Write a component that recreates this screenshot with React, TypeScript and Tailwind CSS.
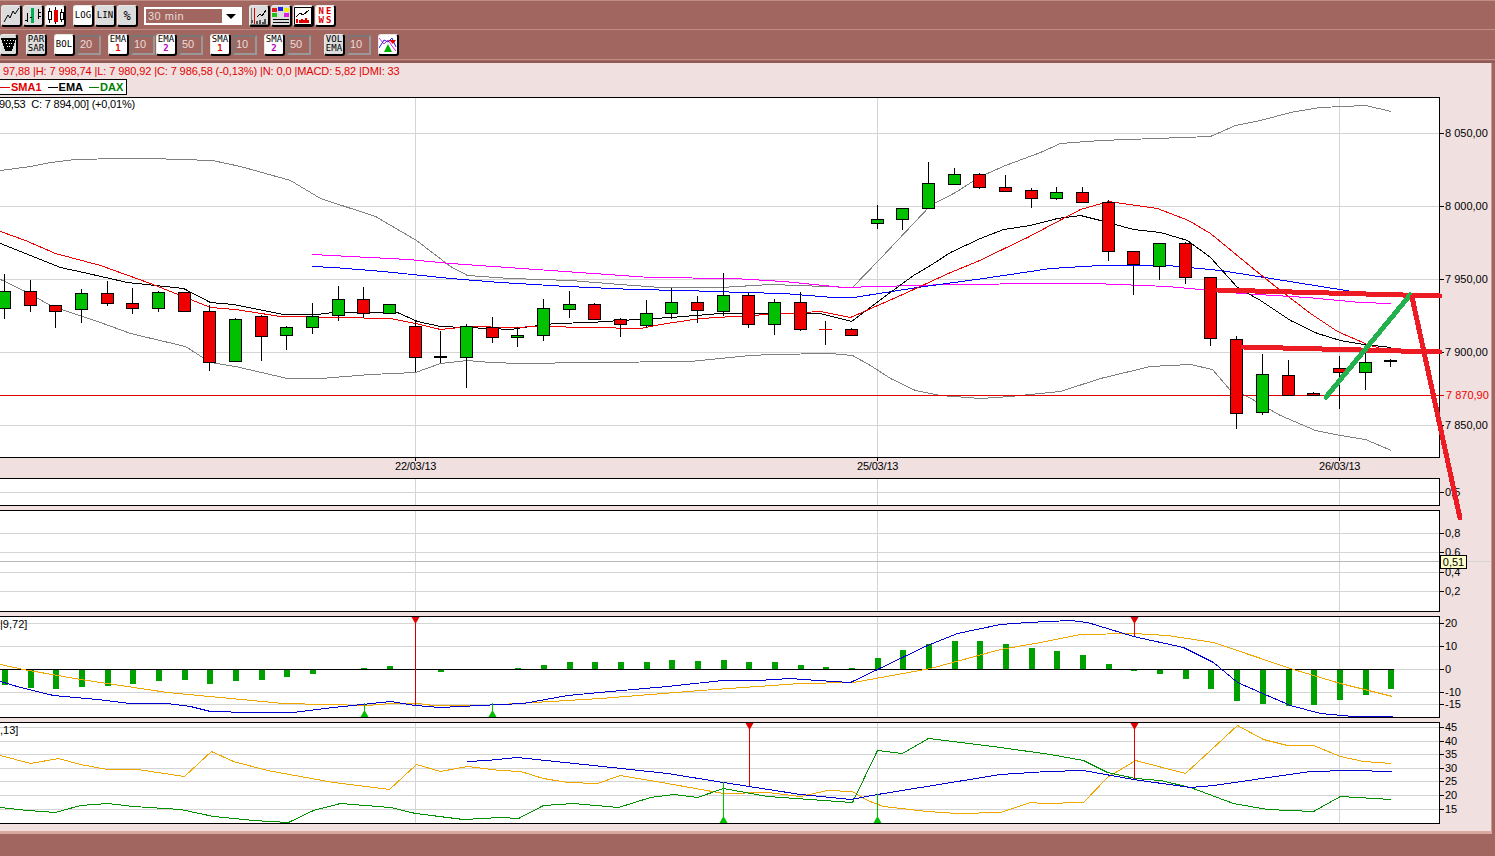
import type { ReactNode } from "react";

type Pt = [number, number];
type Candle = [number, number, number, number, "g" | "r" | "b" | "t"];

const step = 25.67;
const cx = (i: number) => Math.round(4 + step * i);
const pts = (p: Pt[]) => p.map(([x, y]) => `${x + 0.5},${y + 0.5}`).join(" ");

// high, body top, body bottom, low, kind
const candles: Candle[] = [
  [274, 291, 308, 319, "g"], [280, 291, 305, 312, "r"], [305, 305, 311, 328, "r"], [289, 293, 309, 323, "g"],
  [281, 293, 303, 306, "r"], [288, 303, 308, 314, "r"], [291, 292, 308, 312, "g"], [292, 292, 311, 312, "r"],
  [305, 311, 362, 371, "r"], [318, 319, 361, 362, "g"], [315, 316, 336, 361, "r"], [326, 327, 335, 350, "g"],
  [303, 316, 327, 334, "g"], [286, 299, 315, 321, "g"], [287, 299, 313, 318, "r"], [304, 304, 313, 313, "g"],
  [320, 326, 357, 372, "r"], [331, 357, 357, 363, "b"], [324, 326, 357, 388, "g"], [317, 327, 337, 343, "r"],
  [327, 335, 337, 347, "g"], [299, 308, 335, 341, "g"], [291, 304, 309, 318, "g"], [303, 304, 319, 319, "r"],
  [318, 319, 324, 337, "r"], [300, 313, 325, 328, "g"], [288, 302, 313, 319, "g"], [296, 302, 310, 323, "r"],
  [273, 295, 311, 316, "g"], [292, 295, 324, 328, "r"], [299, 302, 324, 335, "g"], [292, 302, 329, 331, "r"],
  [321, 329, 329, 345, "t"], [328, 329, 335, 335, "r"], [205, 219, 223, 229, "g"], [208, 208, 219, 230, "g"],
  [162, 183, 208, 209, "g"], [168, 174, 184, 184, "g"], [173, 174, 187, 189, "r"], [175, 187, 191, 191, "r"],
  [188, 190, 198, 208, "r"], [187, 192, 198, 200, "g"], [187, 192, 202, 203, "r"], [200, 202, 251, 261, "r"],
  [251, 251, 264, 295, "r"], [243, 243, 266, 280, "g"], [242, 243, 277, 284, "r"], [277, 277, 338, 346, "r"],
  [336, 339, 413, 429, "r"], [354, 374, 412, 415, "g"], [360, 375, 395, 395, "r"], [392, 393, 395, 395, "r"],
  [356, 368, 372, 409, "r"], [350, 362, 372, 390, "g"], [359, 361, 361, 367, "b"],
];

const bollUp: Pt[] = [[0,170],[30,166],[50,162],[75,159],[120,158],[150,158],[212,160],[240,166],[290,180],[320,198],[375,216],[416,240],[450,266],[467,275],[510,278],[570,280],[620,284],[660,287],[720,287],[770,284],[852,287],[880,258],[930,205],[955,192],[980,176],[1005,165],[1040,152],[1060,143],[1100,140],[1210,136],[1235,125],[1260,120],[1290,112],[1320,107],[1365,105],[1391,111]];
const bollDown: Pt[] = [[0,279],[25,291],[50,305],[70,312],[100,322],[130,333],[185,346],[210,362],[235,366],[287,378],[320,378],[370,374],[415,372],[440,363],[467,360],[490,362],[520,363],[590,362],[690,361],[720,358],[750,355],[771,354],[830,353],[852,355],[870,365],[890,378],[915,390],[940,395],[980,398],[1010,396],[1060,391],[1100,378],[1150,366],[1190,364],[1212,369],[1230,390],[1245,395],[1280,415],[1315,430],[1340,435],[1365,439],[1391,450]];
const ema: Pt[] = [[0,243],[50,263],[60,267],[83,272],[127,282],[183,288],[210,302],[233,304],[283,314],[317,314],[333,312],[397,312],[417,321],[440,326],[490,328],[510,329],[530,326],[555,323],[590,322],[620,320],[670,317],[720,313],[820,313],[851,321],[883,297],[913,275],[930,265],[950,252],[980,238],[1003,229],[1030,225],[1057,218],[1080,215],[1100,220],[1133,229],[1160,232],[1187,240],[1210,257],[1237,287],[1260,300],[1290,320],[1317,333],[1340,340],[1363,344],[1391,347]];
const sma: Pt[] = [[0,231],[25,240],[55,253],[100,265],[150,283],[185,297],[210,307],[235,309],[280,316],[390,318],[415,323],[440,329],[470,326],[510,327],[540,326],[590,327],[640,328],[660,324],[700,318],[750,315],[820,311],[850,317],[900,295],[950,272],[977,261],[1027,237],[1080,209],[1108,201],[1157,208],[1188,220],[1210,233],[1255,270],[1280,290],[1310,313],[1337,331],[1367,344],[1380,348]];
const sma2: Pt[] = [[312,266],[333,267],[383,271],[450,278],[500,282],[567,286],[633,289],[683,290],[743,292],[783,293],[833,297],[853,297],[917,287],[983,278],[1050,268],[1100,265],[1167,265],[1220,270],[1283,280],[1358,292]];
const ema2: Pt[] = [[312,254],[350,256],[408,259],[450,263],[550,270],[650,277],[733,278],[783,281],[843,287],[950,284],[1050,283],[1093,283],[1167,286],[1200,289],[1240,293],[1307,297],[1360,302],[1391,303]];

const macdBars = [685,688,689,687,686,684,681,680,684,681,680,677,674,669,668,666,669,672,669,669,668,665,662,662,662,662,660,661,660,662,662,665,667,668,658,650,644,641,641,644,648,651,655,664,671,674,679,689,701,704,706,705,700,695,689];
const macdBlue: Pt[] = [[0,681],[20,687],[53,695],[97,699],[130,703],[167,703],[190,706],[210,711],[250,712],[293,712],[333,707],[390,701],[415,705],[440,707],[500,704],[523,703],[567,695],[610,691],[667,686],[722,680],[757,680],[790,678],[817,680],[850,682],[877,669],[927,645],[957,633],[1000,624],[1027,622],[1070,620],[1087,622],[1133,636],[1183,647],[1213,662],[1237,682],[1260,692],[1290,705],[1320,713],[1353,716],[1392,716]];
const macdOrange: Pt[] = [[0,664],[23,669],[80,679],[167,692],[283,703],[367,705],[390,703],[417,703],[433,705],[480,705],[500,704],[600,698],[700,690],[800,683],[853,682],[930,668],[1000,649],[1040,642],[1080,634],[1133,633],[1167,635],[1213,642],[1293,669],[1340,683],[1392,696]];

const dmiOrange: Pt[] = [[0,755],[30,763],[58,758],[80,764],[107,769],[137,769],[184,776],[211,751],[233,761],[267,770],[333,782],[389,789],[416,764],[440,771],[467,766],[500,770],[520,771],[543,778],[567,782],[597,783],[620,775],[667,783],[723,793],[767,792],[800,796],[827,790],[852,791],[867,800],[883,806],[927,811],[957,813],[1000,812],[1030,802],[1043,803],[1083,802],[1107,777],[1135,760],[1185,773],[1210,750],[1237,725],[1263,739],[1287,745],[1313,745],[1340,756],[1363,761],[1391,763]];
const dmiGreen: Pt[] = [[0,807],[27,810],[55,812],[80,805],[107,803],[133,806],[180,809],[213,816],[253,820],[288,822],[313,810],[340,803],[390,807],[415,813],[463,819],[500,817],[518,818],[543,805],[573,803],[618,807],[650,797],[673,794],[697,797],[723,788],[767,796],[852,802],[877,750],[902,753],[928,738],[1000,747],[1050,754],[1083,760],[1107,772],[1135,778],[1160,780],[1190,787],[1233,803],[1267,809],[1313,811],[1340,796],[1391,799]];
const dmiBlue: Pt[] = [[467,761],[487,760],[517,757],[593,765],[667,773],[723,782],[800,794],[850,799],[877,794],[1000,774],[1047,771],[1083,770],[1133,779],[1190,787],[1213,785],[1310,771],[1350,770],[1392,771]];

function Line({ p, color }: { p: Pt[]; color: string }) {
  return <polyline points={pts(p)} fill="none" stroke={color} strokeWidth={1} shapeRendering="crispEdges" />;
}

function Grid({ ys, y1, y2 }: { ys: number[]; y1: number; y2: number }) {
  return (
    <g stroke="#d4d4d4" shapeRendering="crispEdges">
      {ys.map((y) => (
        <line key={y} x1={0} x2={1440} y1={y + 0.5} y2={y + 0.5} />
      ))}
      {[415, 877, 1339].map((x) => (
        <line key={x} x1={x + 0.5} x2={x + 0.5} y1={y1} y2={y2} />
      ))}
    </g>
  );
}

function Panel({
  top,
  height,
  ticks,
  children,
}: {
  top: number;
  height: number;
  ticks: [number, string][];
  children: ReactNode;
}) {
  return (
    <div className="flex shrink-0" style={{ height }}>
      <div className="w-[1440px] border border-l-0 border-black bg-white">
        <svg width={1439} height={height - 2} viewBox={`0 ${top + 1} 1439 ${height - 2}`} className="block">
          {children}
        </svg>
      </div>
      <svg width={51} height={height} viewBox={`1440 ${top} 51 ${height}`} className="block overflow-visible">
        {ticks.map(([y, t]) => (
          <g key={t}>
            <line x1={1440} x2={1444} y1={y + 0.5} y2={y + 0.5} stroke="#000" shapeRendering="crispEdges" />
            <text x={1445} y={y + 3.5} fontSize={11} fill="#000">
              {t}
            </text>
          </g>
        ))}
      </svg>
    </div>
  );
}

function Pin({ x, y1, y2, color }: { x: number; y1: number; y2: number; color: string }) {
  return <line x1={x + 0.5} x2={x + 0.5} y1={y1} y2={y2} stroke={color} shapeRendering="crispEdges" />;
}

function TriDown({ x, y }: { x: number; y: number }) {
  return <polygon points={`${x - 3.5},${y} ${x + 4.5},${y} ${x + 0.5},${y + 7}`} fill="#e00000" />;
}

function TriUp({ x, y }: { x: number; y: number }) {
  return <polygon points={`${x - 3.5},${y} ${x + 4.5},${y} ${x + 0.5},${y - 7}`} fill="#00c000" />;
}

function Btn({
  children,
  gray,
  w = "w-[21px]",
  h = "h-[22px]",
  ml,
}: {
  children: ReactNode;
  gray?: boolean;
  w?: string;
  h?: string;
  ml?: string;
}) {
  return (
    <div
      className={`${w} ${h} ${ml ?? ""} ${gray ? "bg-[#dcdcdc]" : "bg-white"} shrink-0 flex flex-col items-center justify-center rounded-[3px] border-t border-l border-t-[#e8e8e8] border-l-[#e8e8e8] border-r-2 border-b-2 border-r-black border-b-black overflow-hidden leading-[9px] text-[9px] text-black font-['DejaVu_Sans_Mono',monospace]`}
    >
      {children}
    </div>
  );
}

function Field({ v }: { v: string }) {
  return (
    <div className="ml-[2px] w-[24px] h-[20px] shrink-0 flex items-center pl-[1px] border-2 border-t-[#777] border-l-[#777] border-r-[#999] border-b-[#999] text-[11px] text-[#eadcd8] font-['Liberation_Sans',sans-serif]">
      {v}
    </div>
  );
}

function Ema({ a, n, c }: { a: string; n: string; c: string }) {
  return (
    <>
      <span>{a}</span>
      <span className={`${c} font-bold`}>{n}</span>
    </>
  );
}

export default function App() {
  return (
    <div className="relative flex h-[856px] w-[1495px] flex-col overflow-hidden bg-[#a0665f] font-['Liberation_Sans',sans-serif]">
      {/* toolbars */}
      <div className="h-[30px] shrink-0 flex items-center pl-[1px] pt-[2px] border-t border-t-[#c08c84] border-b border-b-[#c08c84]">
        <Btn gray>
          <svg width="17" height="17" viewBox="0 0 17 17" fill="none" stroke="#000">
            <path d="M1 15 5 8 7 11 10 4 12 7 16 1" />
          </svg>
        </Btn>
        <Btn gray ml="ml-[1px]">
          <svg width="18" height="17" viewBox="0 0 18 17" fill="none" stroke="#000" shapeRendering="crispEdges">
            <path d="M3.5 6v9M1 13h3M14.5 2v10M14 5h3M14 9h3" />
            <path d="M8.5 1v15" stroke="#00b050" strokeWidth="3" />
            <path d="M6 10h2" />
          </svg>
        </Btn>
        <Btn ml="ml-[1px]">
          <svg width="18" height="17" viewBox="0 0 18 17" shapeRendering="crispEdges" stroke="#000">
            <path d="M3.5 1v15M9.5 0v17M15.5 2v13" />
            <rect x="2" y="4" width="3" height="8" fill="#fff" />
            <rect x="8" y="3" width="3" height="11" fill="#e00000" stroke="#e00000" />
            <rect x="14" y="5" width="3" height="7" fill="#fff" />
          </svg>
        </Btn>
        <Btn ml="ml-[7px]">LOG</Btn>
        <Btn gray ml="ml-[1px]">LIN</Btn>
        <Btn gray ml="ml-[1px]"><span className="text-[12px] leading-none">%</span></Btn>
        <div className="ml-[6px] flex h-[18px] w-[98px] shrink-0 items-stretch border-2 border-white">
          <div className="flex-1 pl-[2px] text-[11px] leading-[14px] tracking-[0.5px] text-[#eadcd8]">30 min</div>
          <div className="flex w-[18px] items-center justify-center bg-white">
            <div className="h-0 w-0 border-x-[5px] border-t-[5px] border-x-transparent border-t-black" />
          </div>
        </div>
        <Btn gray ml="ml-[7px]">
          <svg width="18" height="18" viewBox="0 0 18 18" fill="none" shapeRendering="crispEdges">
            <path d="M1 1v16h16" stroke="#777" />
            <path d="M4.5 1v16" stroke="#e00000" />
            <path d="M7 10 10 7 12 9 16 3" stroke="#000" />
            <path d="M2 16v-3M7 17v-3M10 17v-4M13 17v-2M15 17v-5" stroke="#555" strokeWidth="1.5" />
          </svg>
        </Btn>
        <Btn gray ml="ml-[1px]">
          <svg width="18" height="18" viewBox="0 0 18 18" shapeRendering="crispEdges">
            <rect x="0" y="1" width="5" height="4" fill="#e02020" />
            <rect x="6" y="0" width="5" height="4" fill="#2020e0" />
            <rect x="12" y="1" width="5" height="4" fill="#f0f000" />
            <rect x="0" y="6" width="5" height="4" fill="#20c020" />
            <rect x="12" y="6" width="5" height="4" fill="#e020e0" />
            <rect x="1" y="12" width="16" height="1" fill="#000" />
            <rect x="1" y="15" width="16" height="1" fill="#000" />
          </svg>
        </Btn>
        <Btn ml="ml-[1px]">
          <svg width="18" height="18" viewBox="0 0 18 18" fill="none" shapeRendering="crispEdges">
            <rect x="0.5" y="0.5" width="17" height="17" stroke="#000" />
            <path d="M2 10 6 6 9 8 15 3" stroke="#000" />
            <path d="M3 16v-4M6 16v-3M8 16v-4M10 16v-3M12 16v-5M14 16v-3" stroke="#e00000" strokeWidth="1.5" />
          </svg>
        </Btn>
        <Btn ml="ml-[1px]">
          <div className="grid grid-cols-2 gap-x-[2px] text-[9px] font-bold leading-[9px] text-[#e00000]">
            <span>N</span>
            <span>E</span>
            <span>W</span>
            <span>S</span>
          </div>
        </Btn>
      </div>
      <div className="h-[30px] shrink-0 flex items-center border-b border-b-[#c08c84]">
        <Btn gray w="w-[18px]">
          <svg width="15" height="15" viewBox="0 0 15 15" shapeRendering="crispEdges">
            <path d="M0 1h15L11 14H4z" fill="#000" />
            <path d="M3 3h1v1H3zM6 3h1v1H6zM9 3h1v1H9zM12 3h1v1h-1zM5 6h1v1H5zM8 6h1v1H8zM10 6h1v1h-1zM6 9h1v1H6zM8 9h1v1H8z" fill="#fff" />
          </svg>
        </Btn>
        <Btn gray ml="ml-[8px]">
          <span>PAR</span>
          <span>SAR</span>
        </Btn>
        <Btn ml="ml-[7px]">BOL</Btn>
        <Field v="20" />
        <Btn ml="ml-[7px]"><Ema a="EMA" n="1" c="text-[#e00000]" /></Btn>
        <Field v="10" />
        <Btn ml="ml-[1px]"><Ema a="EMA" n="2" c="text-[#c000c0]" /></Btn>
        <Field v="50" />
        <Btn ml="ml-[7px]"><Ema a="SMA" n="1" c="text-[#e00000]" /></Btn>
        <Field v="10" />
        <Btn ml="ml-[7px]"><Ema a="SMA" n="2" c="text-[#c000c0]" /></Btn>
        <Field v="50" />
        <Btn gray ml="ml-[13px]">
          <span>VOL</span>
          <span>EMA</span>
        </Btn>
        <Field v="10" />
        <Btn ml="ml-[7px]">
          <svg width="18" height="18" viewBox="0 0 18 18" fill="none">
            <path d="M0 3 5 9 9 5 13 11 17 16" stroke="#e020e0" />
            <path d="M0 13 5 5 9 7 13 3 17 12" stroke="#2020e0" />
            <path d="M9 9 5 17h8z" fill="#00b000" />
            <path d="M10 5h7l-3 4z" fill="#e00000" />
          </svg>
        </Btn>
      </div>

      {/* window body */}
      <div className="flex min-h-0 flex-1 flex-col">
        <div className="mt-[1px] h-[2px] shrink-0 bg-[#8f5a54]" />
        <div className="flex flex-col bg-[#f0e0e0] mr-[3px] h-[768px] shrink-0 overflow-hidden border-r border-r-[#c89a92]">
          <div className="h-[16px] shrink-0 whitespace-pre pl-[3px] pt-[2px] text-[11px] leading-[13px] tracking-[-0.1px] text-[#e00000]">
            97,88 |H: 7 998,74 |L: 7 980,92 |C: 7 986,58 (-0,13%) |N: 0,0 |MACD: 5,82 |DMI: 33
          </div>
          <div className="flex h-[16px] w-[127px] shrink-0 items-center gap-[6px] border border-l-0 border-black bg-white text-[11px] font-bold leading-none">
            <span className="flex items-center text-[#e00000]"><i className="mr-[1px] h-px w-[10px] bg-[#e00000]" />SMA1</span>
            <span className="flex items-center text-black"><i className="mr-[1px] h-px w-[10px] bg-black" />EMA</span>
            <span className="flex items-center text-[#008000]"><i className="mr-[1px] h-px w-[10px] bg-[#008000]" />DAX</span>
          </div>
          <div className="h-[2px] shrink-0" />

          {/* main price chart */}
          <Panel
            top={97}
            height={361}
            ticks={[
              [133, "8 050,00"],
              [206, "8 000,00"],
              [279, "7 950,00"],
              [352, "7 900,00"],
              [425, "7 850,00"],
            ]}
          >
            <Grid ys={[133, 206, 279, 352, 425]} y1={98} y2={457} />
            <text x={-1} y={108} fontSize={11} fill="#000" letterSpacing={-0.2} className="whitespace-pre">
              90,53  C: 7 894,00] (+0,01%)
            </text>
            <Line p={bollUp} color="#808080" />
            <Line p={bollDown} color="#808080" />
            <Line p={ema2} color="#ff00ff" />
            <Line p={sma2} color="#0000ff" />
            <Line p={ema} color="#000000" />
            <Line p={sma} color="#f00000" />
            <line x1={0} x2={1440} y1={395.5} y2={395.5} stroke="#e00000" shapeRendering="crispEdges" />
            {candles.map(([hi, top, bot, lo, k], i) => {
              const x = cx(i);
              return (
                <g key={i} shapeRendering="crispEdges">
                  <line x1={x + 0.5} x2={x + 0.5} y1={hi} y2={lo} stroke="#000" />
                  {k === "b" && <rect x={x - 6} y={top - 1} width={13} height={2} fill="#000" />}
                  {k === "t" && <rect x={x - 6} y={top} width={13} height={1} fill="#e00000" />}
                  {(k === "g" || k === "r") && (
                    <rect
                      x={x - 5.5}
                      y={top + 0.5}
                      width={12}
                      height={bot - top}
                      fill={k === "g" ? "#00c000" : "#f00000"}
                      stroke="#000"
                    />
                  )}
                </g>
              );
            })}
          </Panel>

          {/* dates */}
          <div className="h-[20px] shrink-0">
            <svg width={1440} height={20} viewBox="0 458 1440 20" className="block">
              <g fill="#000" fontSize={11}>
                {[
                  [415, "22/03/13"],
                  [877, "25/03/13"],
                  [1339, "26/03/13"],
                ].map(([x, t]) => (
                  <g key={t}>
                    <line x1={Number(x) + 0.5} x2={Number(x) + 0.5} y1={458} y2={461} stroke="#000" shapeRendering="crispEdges" />
                    <text x={Number(x) - 20} y={470} letterSpacing={-0.2}>{t}</text>
                  </g>
                ))}
              </g>
            </svg>
          </div>

          <Panel top={478} height={28} ticks={[[492, "0,5"]]}>
            <Grid ys={[492]} y1={479} y2={505} />
          </Panel>
          <div className="h-[4px] shrink-0" />

          <div className="relative shrink-0">
            <Panel
              top={510}
              height={102}
              ticks={[
                [533, "0,8"],
                [552, "0,6"],
                [572, "0,4"],
                [591, "0,2"],
              ]}
            >
              <Grid ys={[533, 552, 572, 591]} y1={511} y2={611} />
              <line x1={0} x2={1440} y1={561.5} y2={561.5} stroke="#b8b8b8" shapeRendering="crispEdges" />
            </Panel>
            <div className="absolute left-[1467px] top-[51px] h-px w-[23px] bg-[#d4d4d4]" />
            <div className="absolute left-[1440px] top-[45px] flex h-[14px] w-[27px] items-center justify-center border border-black bg-[#ffffcc] text-[11px] leading-none text-black">
              0,51
            </div>
          </div>
          <div className="h-[4px] shrink-0" />

          <Panel
            top={616}
            height={102}
            ticks={[
              [623, "20"],
              [646, "10"],
              [669, "0"],
              [692, "-10"],
              [704, "-15"],
            ]}
          >
            <Grid ys={[623, 646, 669, 692, 704]} y1={617} y2={717} />
            <text x={0} y={628} fontSize={11} fill="#000">|9,72]</text>
            {macdBars.map((y, i) => (
              <rect
                key={i}
                x={cx(i) - 2}
                y={Math.min(y, 669)}
                width={6}
                height={Math.abs(y - 669)}
                fill="#00a000"
                shapeRendering="crispEdges"
              />
            ))}
            <line x1={0} x2={1394} y1={669.5} y2={669.5} stroke="#000" shapeRendering="crispEdges" />
            <Line p={macdOrange} color="#f0a800" />
            <Line p={macdBlue} color="#0000d0" />
            <Pin x={415} y1={618} y2={705} color="#d00000" />
            <Pin x={1134} y1={618} y2={636} color="#e00000" />
            <TriDown x={415} y={617} />
            <TriDown x={1134} y={617} />
            <Pin x={364} y1={703} y2={717} color="#00c000" />
            <Pin x={492} y1={703} y2={717} color="#00c000" />
            <TriUp x={364} y={717} />
            <TriUp x={492} y={717} />
          </Panel>
          <div className="h-[4px] shrink-0" />

          <Panel
            top={722}
            height={102}
            ticks={[
              [727, "45"],
              [741, "40"],
              [754, "35"],
              [768, "30"],
              [781, "25"],
              [795, "20"],
              [809, "15"],
            ]}
          >
            <Grid ys={[727, 741, 754, 768, 781, 795, 809]} y1={723} y2={823} />
            <text x={0} y={734} fontSize={11} fill="#000">,13]</text>
            <Line p={dmiOrange} color="#f0a800" />
            <Line p={dmiGreen} color="#009000" />
            <Line p={dmiBlue} color="#0000d0" />
            <Pin x={749} y1={723} y2={786} color="#e00000" />
            <Pin x={1134} y1={723} y2={779} color="#e00000" />
            <Pin x={723} y1={782} y2={823} color="#00c000" />
            <Pin x={877} y1={794} y2={823} color="#00c000" />
            <TriDown x={749} y={723} />
            <TriDown x={1134} y={723} />
            <TriUp x={723} y={823} />
            <TriUp x={877} y={823} />
          </Panel>
        </div>
        <div className="h-[3px] mr-[3px] shrink-0 bg-[#d9a8a0]" />
      </div>

      {/* last price label sits over the axis gutter */}
      <div className="absolute left-[1440px] top-[395px] h-px w-[4px] bg-[#e00000]" />
      <div className="absolute left-[1446px] top-[389px] text-[11px] leading-[13px] text-[#f00000]">7 870,90</div>

      {/* hand drawn trend lines on top of the window */}
      <svg className="pointer-events-none absolute inset-0" width={1495} height={856} viewBox="0 0 1495 856" fill="none" strokeWidth={5} strokeLinecap="round" shapeRendering="crispEdges">
        <path d="M1218 290 1440 296" stroke="#ed1c24" />
        <path d="M1243 347 1440 352" stroke="#ed1c24" />
        <path d="M1326 397 1410 295" stroke="#22b14c" />
        <path d="M1412 297 1460 518" stroke="#ed1c24" />
      </svg>
    </div>
  );
}
